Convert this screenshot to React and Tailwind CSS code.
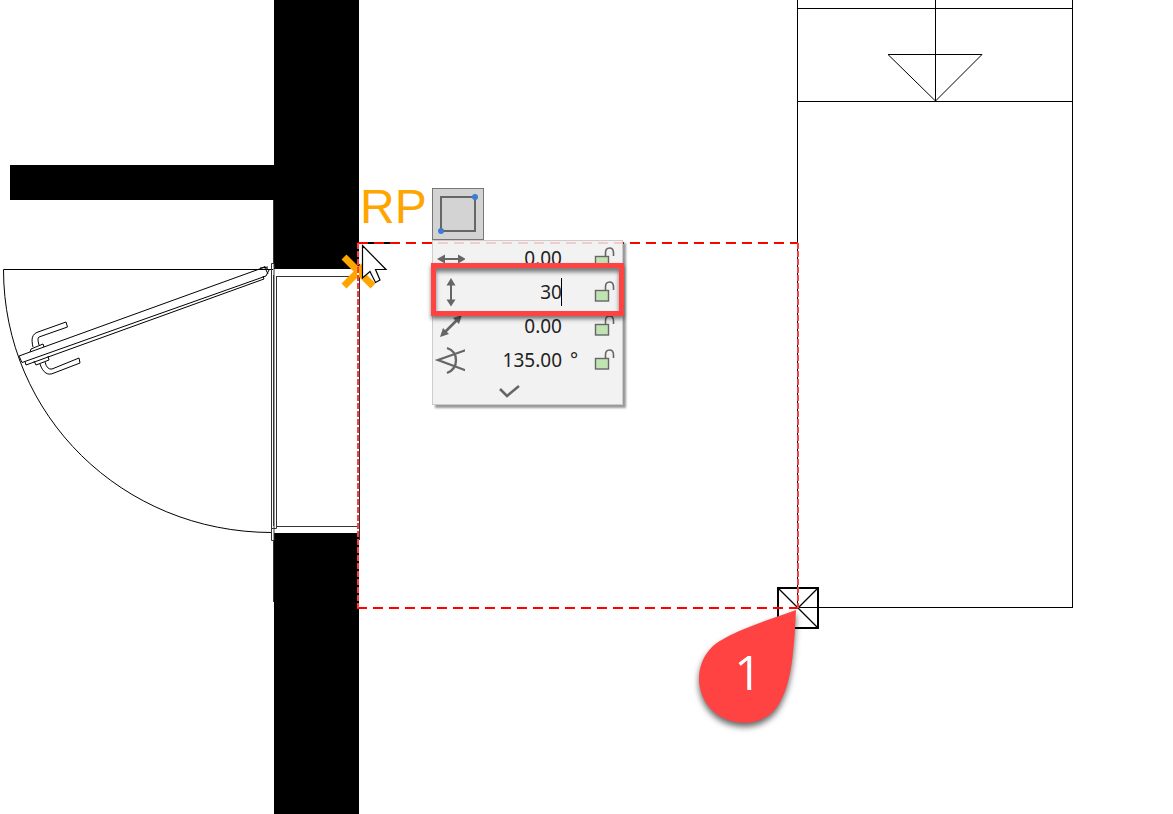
import React, { useState } from "react";

const ROWS = [
  { id: "width", label: "Width", value: "0.00", unit: "" },
  { id: "height", label: "Height", value: "30", unit: "" },
  { id: "length", label: "Length", value: "0.00", unit: "" },
  { id: "angle", label: "Angle", value: "135.00", unit: "°" },
];

const RowIcon = ({ id }) => (
  <svg width="32" height="34" viewBox="0 0 32 34" fill="none" stroke="#666" strokeWidth="2">
    {id === "width" && (
      <>
        <path d="M8 18H28" />
        <path d="M4 18L12 13.500V22.500ZM33 18L25 13.500V22.500Z" fill="#666" stroke="none" />
      </>
    )}
    {id === "height" && (
      <>
        <path d="M18 8V27" />
        <path d="M18 3L13.500 10.500H22.500ZM18 31.500L13.500 24.500H22.500Z" fill="#666" stroke="none" />
      </>
    )}
    {id === "length" && (
      <>
        <path d="M11 24L25 10" strokeWidth="2.600" />
        <path d="M7 28L10 19L16 25ZM29 6L26 15L20 9Z" fill="#666" stroke="none" />
      </>
    )}
    {id === "angle" && (
      <>
        <path d="M33 7L5 17L33 27.500" strokeWidth="2.300" />
        <path d="M14 5C26 9 26 25 14 30" strokeWidth="2.300" />
      </>
    )}
  </svg>
);

const LockIcon = () => (
  <svg width="22" height="24" viewBox="0 0 22 24" fill="none" stroke="#666">
    <path d="M11.5 11V7Q11.5 2 15.500 2Q19.500 2 19.500 7V10" strokeWidth="1.600" />
    <rect x="1.500" y="10.500" width="13" height="10.500" fill="#c1e3b4" strokeWidth="1.400" />
  </svg>
);

const FloorPlan = () => (
  <svg
    className="absolute left-0 top-0"
    width="1173"
    height="814"
    viewBox="0 0 1173 814"
    fill="none"
    stroke="#000"
  >
    {/* walls */}
    <path d="M274 0H359V269H274V200H10V165H274ZM274 533H359V814H274Z" fill="#000" stroke="none" />

    {/* door swing and frame */}
    <path d="M3.500 269.500H273M3.500 269.500C3.500 415 122 532.500 272 532.500" strokeWidth="1" />
    <g stroke="#333">
      <path d="M271.500 263.500H274V540.500H271.500ZM273.500 275V526M276.500 276.500V528.500H272" />
      <path d="M274.500 276V527" stroke="#999" />
      <path d="M276 276.500H358M276 526.500H358M357.500 269V533M359.500 264V540" />
      <path d="M273.500 540V602M273.500 200V264" />
    </g>

    {/* door leaf */}
    <g strokeWidth="1">
      <path d="M19 356L265 267L269 270L266 276L22 362.500Z" />
      <path d="M25 361.500L26 365L264 279L263 276" />
      <path d="M260 268L268 267M264 266L268 274" />
      <path d="M30 352L31 349L43 344L44 347" />
      <path d="M34 361L36 365L49 360L48 356" />
      <path d="M33 347C31 339 32 334 38 332L66 322L67.500 327L39 337Q37 338 39 345" />
      <path d="M40 364C43 373 48 376 54 373L80 363L79 358L52 369Q47 370 45 362" />
    </g>

    {/* stairs */}
    <path
      d="M797.500 0V607M1072.500 0V607.500H798M797 8.500H1072M797 101.500H1072M935.500 0V101"
      shapeRendering="crispEdges"
    />
    <path d="M888 54.500H982L935.500 101Z" />

    {/* reference point */}
    <path d="M344 257L373 286M373 257L344 286" stroke="#ffa500" strokeWidth="7" />
    <text
      x="360"
      y="223"
      fill="#ffa500"
      stroke="none"
      fontSize="48"
      fontFamily="'Liberation Sans', Arial, sans-serif"
    >
      RP
    </text>

    {/* rubber band */}
    <rect x="778" y="588" width="40" height="40" strokeWidth="2" />
    <path d="M778 588L818 628M818 588L798 608" strokeWidth="1.300" />
    <path d="M359 243H390" strokeWidth="2" />
    <g stroke="#f00" strokeWidth="2" strokeDasharray="10 6">
      <path d="M358 243H798" />
      <path d="M357 608H798" />
    </g>
    <path d="M358 269V533M798 243V608" stroke="#fff" strokeWidth="2" />
    <path d="M797.500 243V608" strokeWidth="1" />
    <path d="M358 243V608M798 243V608" stroke="#ff3b3b" strokeWidth="2" strokeDasharray="6 2" />

    {/* cursor */}
    <path
      d="M362.500 245.500V278L370 271.500L375.500 282.500L380 280L375.500 269.500H386Z"
      fill="#fff"
      strokeWidth="1.200"
    />
  </svg>
);

const StepMarker = () => (
  <svg
    className="absolute left-[690px] top-[600px] drop-shadow-[0_4px_3px_rgba(0,0,0,0.6)]"
    width="120"
    height="130"
    viewBox="690 600 120 130"
  >
    <path
      d="M796 610C794 650 792 681 780 702C767 728 729 729 710 708C695 691 695 664 712 647C727 633 768 620 796 610Z"
      fill="#ff4343"
    />
    <text
      x="748"
      y="690"
      fill="#fff"
      fontSize="48"
      fontWeight="500"
      textAnchor="middle"
      fontFamily="'Open Sans', sans-serif"
    >
      1
    </text>
  </svg>
);

const Tracker = () => {
  const [values, setValues] = useState(ROWS.map((row) => row.value));

  const changeValue = (index, value) => {
    setValues(values.map((item, i) => (i === index ? value : item)));
  };

  return (
    <div className="absolute left-[432px] top-[188px] w-48">
      <button
        aria-label="Rectangle by corners"
        className="block size-13 border border-[#777] bg-[#d3d3d3]"
      >
        <svg width="50" height="50" viewBox="0 0 50 50">
          <rect x="8" y="8" width="34" height="34" fill="none" stroke="#666" strokeWidth="2" />
          <circle cx="8" cy="42" r="3" fill="#3f7bd6" />
          <circle cx="42" cy="8" r="3" fill="#3f7bd6" />
        </svg>
      </button>

      <div className="h-[165px] w-[191px] border border-[#ccc] bg-[#f0f0f0]/85 shadow-[3px_3px_2px_rgba(0,0,0,0.4)]">
        {ROWS.map((row, index) => (
          <div key={row.id} className="flex h-[34px] items-center">
            <label htmlFor={row.id} aria-label={row.label}>
              <RowIcon id={row.id} />
            </label>
            <div className="relative ml-auto">
              <input
                id={row.id}
                value={values[index]}
                onChange={(e) => changeValue(index, e.target.value)}
                className="block h-7 w-20 bg-transparent text-right font-['Noto_Sans',sans-serif] text-[19px] text-[#222] outline-none"
              />
              {row.id === "height" && <span className="absolute right-0 top-0 h-7 w-px bg-black" />}
            </div>
            <span className="w-8 pl-2 font-['Noto_Sans',sans-serif] text-[19px] text-[#222]">
              {row.unit}
            </span>
            <button aria-label={`Lock ${row.label}`} className="mr-1.5">
              <LockIcon />
            </button>
          </div>
        ))}
        <button aria-label="More" className="flex h-7 w-full items-center justify-center pr-9">
          <svg width="22" height="14" viewBox="0 0 22 14" fill="none" stroke="#666" strokeWidth="2.500">
            <path d="M1 5L8 12L20 2" />
          </svg>
        </button>
      </div>

      {/* callout around the height row */}
      <div className="pointer-events-none absolute -left-px top-[75px] h-[53px] w-[193px] border-5 border-[#ff4343] shadow-[0_3px_4px_rgba(0,0,0,0.5),inset_0_4px_4px_rgba(0,0,0,0.5)]" />
    </div>
  );
};

export default function App() {
  return (
    <main className="relative min-h-screen w-full overflow-hidden bg-white">
      <FloorPlan />
      <Tracker />
      <StepMarker />
    </main>
  );
}
